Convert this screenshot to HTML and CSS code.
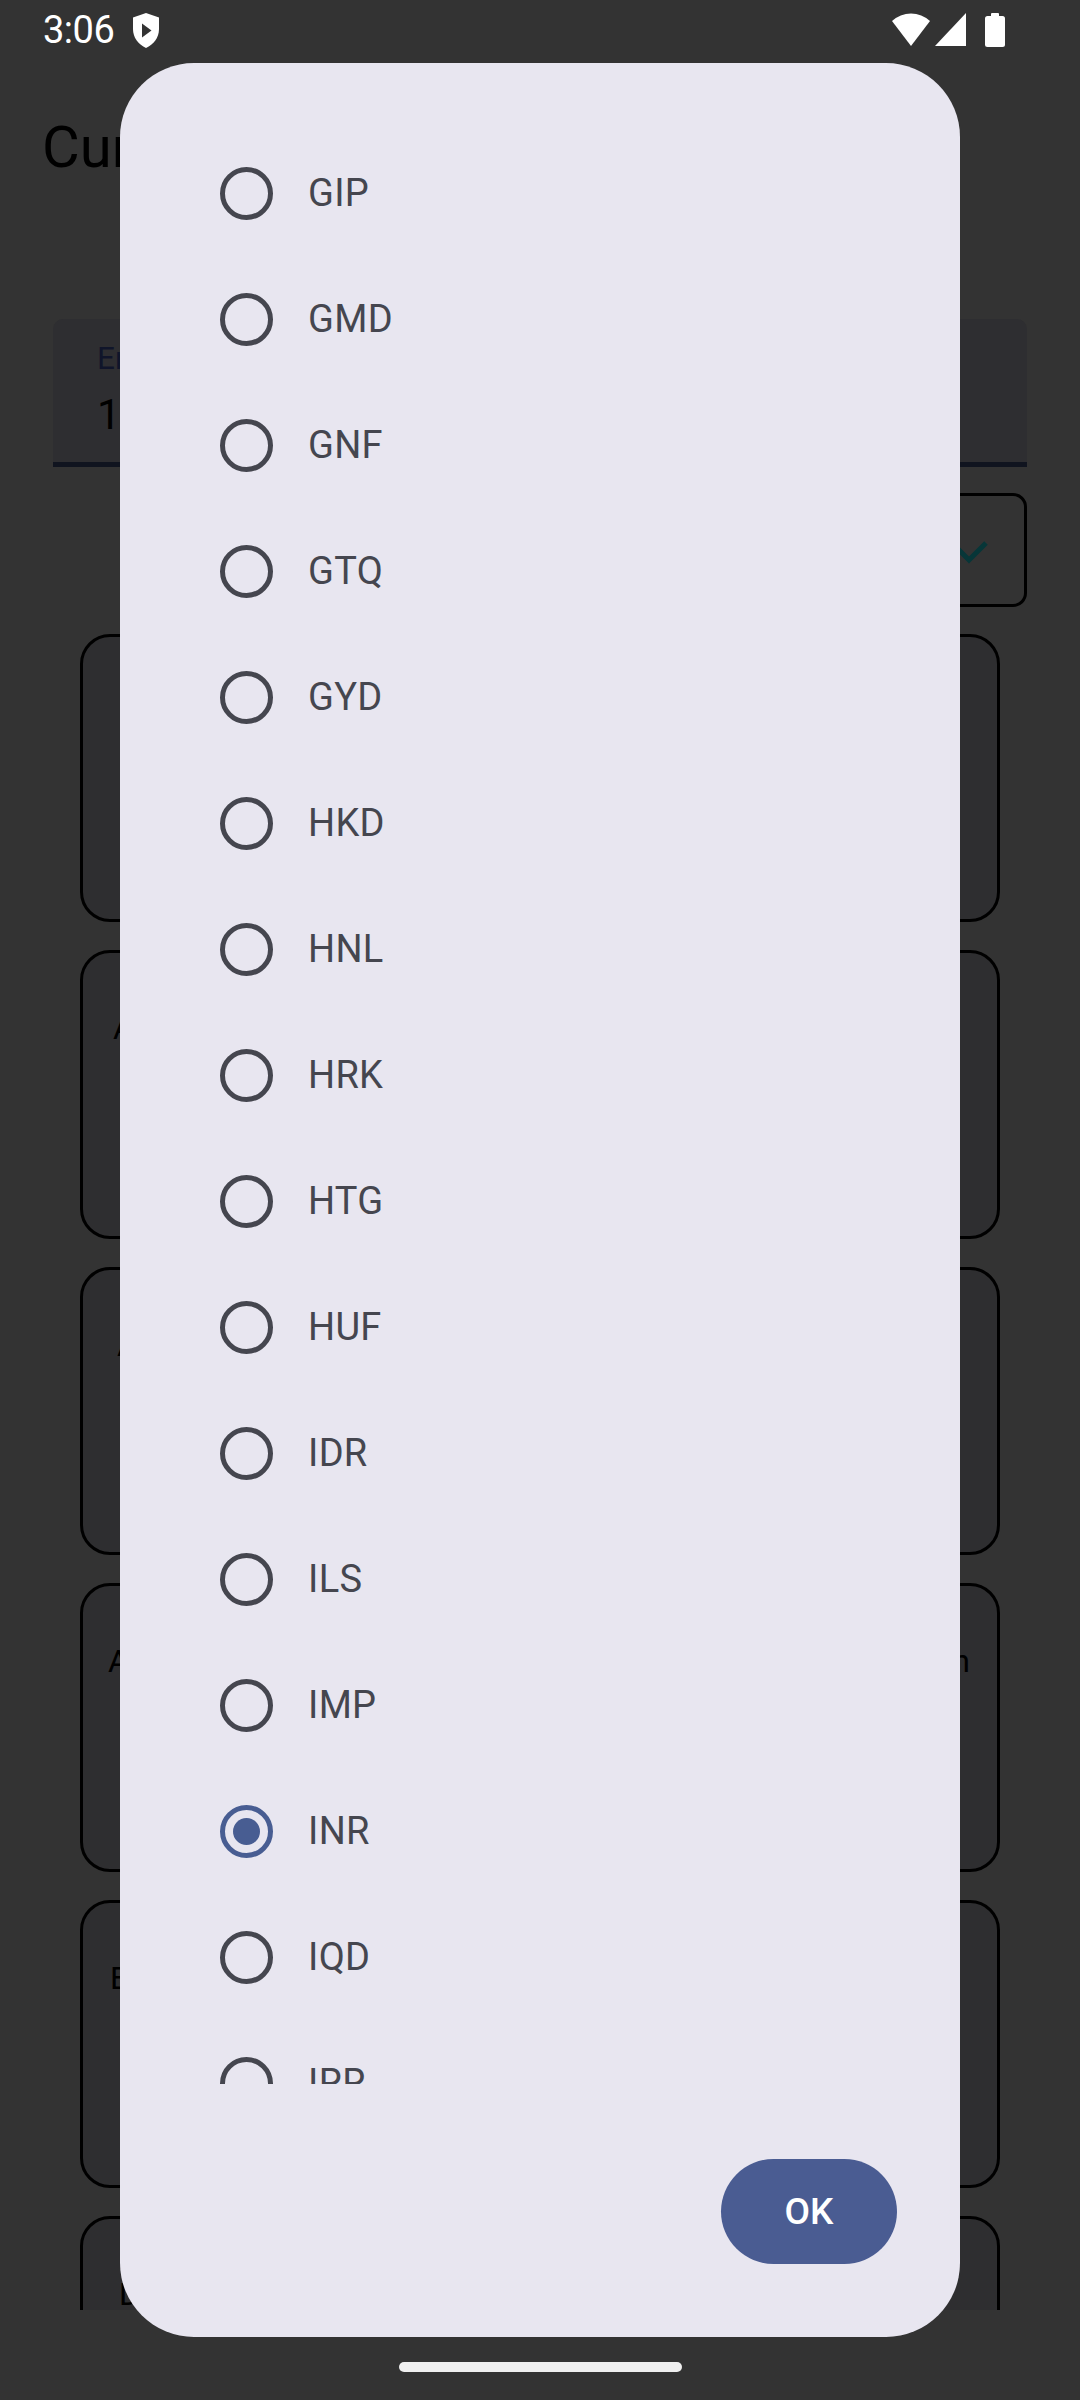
FILE: index.html
```html
<!DOCTYPE html>
<html lang="en">
<head>
<meta charset="utf-8">
<title>Currency Converter</title>
<link rel="stylesheet" href="styles.css">
</head>
<body>
<div class="screen">
  <div class="statusbar">
    <span class="time">3:06</span>
    <svg class="shield" width="30" height="37" viewBox="0 0 30 37">
      <path d="M15 1 L28 5.5 V17 C28 26 22.5 32.5 15 36 C7.5 32.5 2 26 2 17 V5.5 Z" fill="#ffffff"/>
      <path d="M11 11.5 L20.5 18.5 L11 25.5 Z" fill="#333333"/>
    </svg>
    <svg class="sys-icons" width="116" height="36" viewBox="0 0 116 36">
      <path d="M2 9 A28 28 0 0 1 40 9 L21 34 Z" fill="#ffffff"/>
      <path d="M76 1 L76 34 L45 34 Z" fill="#ffffff"/>
      <rect x="101" y="1" width="8" height="5" rx="1" fill="#ffffff"/>
      <rect x="95" y="4" width="20" height="31" rx="2.5" fill="#ffffff"/>
    </svg>
  </div>

  <main class="app">
    <h1 class="title">Currency Converter</h1>
    <div class="field">
      <div class="field-label">Enter amount</div>
      <div class="field-value">1</div>
    </div>
    <div class="select">
      <svg class="chevron" width="40" height="40" viewBox="0 0 40 40">
        <path d="M3 13 L20 30 L37 13" fill="none" stroke="#073638" stroke-width="5"/>
      </svg>
    </div>
    <div class="cards">
      <div class="card card-center"><div class="card-row"><span>USD to INR</span></div></div>
      <div class="card"><div class="card-row offset-3"><span>AUD · Australian Dollar</span></div></div>
      <div class="card"><div class="card-row offset-7"><span>ARS · Argentine Peso</span></div></div>
      <div class="card"><div class="card-row offset-n2"><span>AFN</span><span>Afghanistan</span></div></div>
      <div class="card"><div class="card-row"><span>EUR · Euro</span></div></div>
      <div class="card"><div class="card-row offset-9"><span>DKK · Danish Krone</span></div></div>
    </div>
  </main>

  <div class="navbar"><div class="handle"></div></div>

  <div class="dialog">
    <div class="choices">
      <div class="choice"><span class="radio"></span><span class="label">GIP</span></div>
      <div class="choice"><span class="radio"></span><span class="label">GMD</span></div>
      <div class="choice"><span class="radio"></span><span class="label">GNF</span></div>
      <div class="choice"><span class="radio"></span><span class="label">GTQ</span></div>
      <div class="choice"><span class="radio"></span><span class="label">GYD</span></div>
      <div class="choice"><span class="radio"></span><span class="label">HKD</span></div>
      <div class="choice"><span class="radio"></span><span class="label">HNL</span></div>
      <div class="choice"><span class="radio"></span><span class="label">HRK</span></div>
      <div class="choice"><span class="radio"></span><span class="label">HTG</span></div>
      <div class="choice"><span class="radio"></span><span class="label">HUF</span></div>
      <div class="choice"><span class="radio"></span><span class="label">IDR</span></div>
      <div class="choice"><span class="radio"></span><span class="label">ILS</span></div>
      <div class="choice"><span class="radio"></span><span class="label">IMP</span></div>
      <div class="choice"><span class="radio radio-on"></span><span class="label">INR</span></div>
      <div class="choice"><span class="radio"></span><span class="label">IQD</span></div>
      <div class="choice"><span class="radio"></span><span class="label">IRR</span></div>
      <div class="choice"><span class="radio"></span><span class="label">ISK</span></div>
      <div class="choice"><span class="radio"></span><span class="label">JEP</span></div>
    </div>
    <div class="actions">
      <button class="btn-ok">OK</button>
    </div>
  </div>
</div>
</body>
</html>
```

FILE: styles.css
```css
* { box-sizing: border-box; }

html, body {
  margin: 0;
  padding: 0;
  background: #333333;
}

body {
  font-family: "Roboto", "Noto Sans", sans-serif;
}

.screen {
  position: relative;
  width: 1080px;
  height: 2400px;
  overflow: hidden;
  background: #333333;
}

/* status bar */
.statusbar {
  height: 63px;
  padding: 0 74px 3px 43px;
  display: flex;
  align-items: center;
}

.time {
  color: #ffffff;
  font-size: 38px;
  line-height: 60px;
  letter-spacing: -0.5px;
}

.shield {
  margin-left: 17px;
}

.sys-icons {
  margin-left: auto;
}

/* app behind the scrim */
.app {
  height: 2247px;
  overflow: hidden;
  padding: 0 42px;
}

.title {
  margin: 49px 0 0 0;
  font-size: 58px;
  line-height: 70px;
  font-weight: 400;
  color: #000000;
  white-space: nowrap;
}

.field {
  margin: 137px 11px 0;
  height: 148px;
  padding: 20px 0 0 44px;
  background: #2e2e31;
  border-radius: 10px 10px 0 0;
  border-bottom: 5px solid #10141f;
}

.field-label {
  font-size: 31.5px;
  line-height: 40px;
  color: #10152a;
}

.field-value {
  margin-top: 11px;
  font-size: 42px;
  line-height: 50px;
  color: #000000;
}

.select {
  margin: 26px 11px 0 auto;
  width: 480px;
  height: 114px;
  border: 3px solid #000000;
  border-radius: 14px;
  display: flex;
  justify-content: flex-end;
  align-items: center;
  padding-right: 35px;
}

.cards {
  margin: 27px 38px 0;
  display: flex;
  flex-direction: column;
  gap: 28px;
}

.card {
  height: 288.4px;
  flex: none;
  border: 3px solid #000000;
  border-radius: 30px;
  background: #2e2e30;
  padding: 55px 27px 0;
}

.card-row {
  display: flex;
  justify-content: space-between;
  font-size: 32px;
  line-height: 40px;
  color: #000000;
  white-space: nowrap;
}

.card-center .card-row {
  justify-content: center;
}

.offset-3 { margin-left: 3px; }
.offset-7 { margin-left: 7px; }
.offset-9 { margin-left: 9px; }
.offset-n2 { margin-left: -2px; }

/* navigation bar */
.navbar {
  height: 90px;
  padding-top: 52px;
  display: flex;
  justify-content: center;
}

.handle {
  width: 283px;
  height: 10px;
  border-radius: 5px;
  background: #f0f0f0;
}

/* dialog */
.dialog {
  position: absolute;
  left: 120px;
  top: 63px;
  width: 840px;
  height: 2274px;
  border-radius: 74px;
  background: #e8e6f0;
  display: flex;
  flex-direction: column;
}

.choices {
  margin-top: 67px;
  height: 1954px;
  flex: none;
  overflow: hidden;
}

.choice {
  height: 126px;
  display: flex;
  align-items: center;
  padding-left: 100px;
}

.radio {
  width: 53px;
  height: 53px;
  flex: none;
  border: 5px solid #45464f;
  border-radius: 50%;
  display: flex;
  align-items: center;
  justify-content: center;
}

.radio-on {
  border-color: #485d92;
}

.radio-on::after {
  content: "";
  width: 27px;
  height: 27px;
  border-radius: 50%;
  background: #485d92;
}

.label {
  margin-left: 35px;
  font-size: 38px;
  line-height: 48px;
  color: #45464f;
  letter-spacing: 0.3px;
}

.actions {
  margin-top: 75px;
  display: flex;
  justify-content: flex-end;
  padding-right: 63px;
}

.btn-ok {
  width: 176px;
  height: 105px;
  border: none;
  border-radius: 53px;
  background: #4a5c92;
  color: #ffffff;
  font-family: "Roboto", sans-serif;
  font-weight: 500;
  font-size: 37px;
  padding: 0;
}
```
